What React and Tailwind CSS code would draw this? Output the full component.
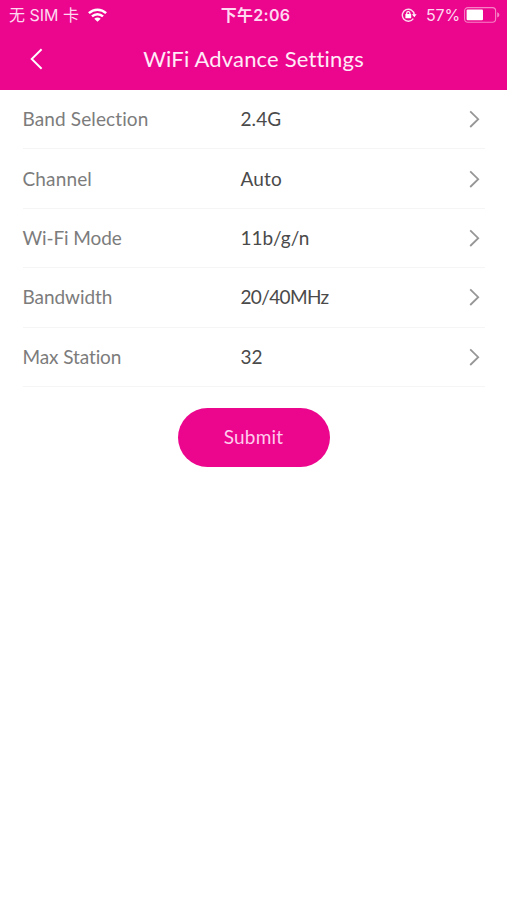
import React from 'react';

const ROWS = [
  { label: 'Band Selection', value: '2.4G', labelTracking: 'tracking-[0.12px]', valueTracking: 'tracking-[0.1px]' },
  { label: 'Channel', value: 'Auto', labelTracking: 'tracking-[0.15px]', valueTracking: 'tracking-[0.2px]' },
  { label: 'Wi-Fi Mode', value: '11b/g/n', labelTracking: 'tracking-[-0.1px]', valueTracking: 'tracking-normal' },
  { label: 'Bandwidth', value: '20/40MHz', labelTracking: 'tracking-[-0.05px]', valueTracking: 'tracking-[-0.65px]' },
  { label: 'Max Station', value: '32', labelTracking: 'tracking-[-0.1px]', valueTracking: 'tracking-normal' },
];

function WifiIcon() {
  return (
    <svg className="ml-[9px] w-[19px] h-[14px]" viewBox="0 0 19 14" fill="none" stroke="#fff" strokeWidth="2.5">
      <path d="M.9 5.1C5.8 .5 13.2 .5 18.1 5.1" />
      <path d="M4 8.4C7.2 5.4 11.8 5.4 15 8.4" />
      <path d="M9.5 13.8 6.3 10.7C8.1 9.1 10.9 9.1 12.7 10.7Z" fill="#fff" stroke="none" />
    </svg>
  );
}

function RotationLockIcon() {
  return (
    <svg className="w-[16px] h-[14px]" viewBox="0 0 16 14" fill="none" stroke="#fff">
      <path d="M12.3 10.6A6 6 0 1 1 13.3 6.6" strokeWidth="1.4" opacity="0.85" />
      <path d="M10.9 6.3H15.6L13.3 9.2Z" fill="#fff" stroke="none" />
      <rect x="4.4" y="6.1" width="5.8" height="4.2" rx="0.5" fill="#fff" stroke="none" />
      <path d="M5.7 6.4V5.2A1.6 1.6 0 0 1 8.9 5.2V6.4" strokeWidth="1.2" />
    </svg>
  );
}

function BatteryIcon() {
  return (
    <svg className="ml-1 w-[36px] h-[16px]" viewBox="0 0 36 16" fill="none">
      <rect x="0.6" y="0.6" width="31" height="14.6" rx="3.2" stroke="#fff" strokeWidth="1.1" opacity="0.5" />
      <rect x="2.6" y="2.5" width="16.4" height="10.8" rx="1" fill="#fff" />
      <path d="M33.2 5.3C36 6.2 36 9.6 33.2 10.5Z" fill="#fff" opacity="0.5" />
    </svg>
  );
}

function StatusBar() {
  return (
    <div className="grid grid-cols-[1fr_auto_1fr] items-center h-[30px] pl-[9px] pr-[7px] text-[16px] leading-[30px] text-[#ffd9f1] font-['Inter','Noto_Sans_CJK_SC',sans-serif]">
      <div className="flex items-center whitespace-pre">
        <span>无 SIM 卡</span>
        <WifiIcon />
      </div>
      <span className="pl-[2px] font-semibold tracking-[0.3px]">下午2:06</span>
      <div className="flex items-center justify-end">
        <RotationLockIcon />
        <span className="ml-[9px] tracking-[-0.2px]">57%</span>
        <BatteryIcon />
      </div>
    </div>
  );
}

function Header() {
  return (
    <header className="h-[90px] bg-[#ec068d]">
      <StatusBar />
      <div className="grid grid-cols-[60px_1fr_60px] items-center h-[58px]">
        <button className="pl-[30px]" aria-label="Back">
          <svg className="w-[13px] h-[22px]" viewBox="0 0 13 22" fill="none" stroke="#fff" strokeWidth="1.9">
            <path d="M11.6 1.2 1.7 11 11.6 20.8" />
          </svg>
        </button>
        <h1 className="text-center text-[22px] leading-[58px] text-[#ffebf8] whitespace-nowrap tracking-[0.18px]">WiFi Advance Settings</h1>
      </div>
    </header>
  );
}

function SettingRow({ row }) {
  return (
    <button className="flex items-center w-full h-[59.4px] pr-[5px] border-b-[1.5px] border-[#f5f5f5] text-left text-[19px] leading-[28px] whitespace-nowrap">
      <span className={`w-[218px] text-[#7c7c7c] ${row.labelTracking}`}>{row.label}</span>
      <span className={`flex-1 text-[#4a4a4a] ${row.valueTracking}`}>{row.value}</span>
      <svg className="w-[11px] h-[18px]" viewBox="0 0 11 18" fill="none" stroke="#969696" strokeWidth="1.8">
        <path d="M1.2 1.4 9.2 9.2 1.2 17" />
      </svg>
    </button>
  );
}

export default function App() {
  return (
    <div className="min-h-screen bg-white font-['Lato',sans-serif]">
      <Header />
      <main className="flex flex-col items-center px-[22.5px]">
        {ROWS.map(row => <SettingRow key={row.label} row={row} />)}
        <button className="mt-[21px] w-[152px] h-[59px] rounded-full bg-[#ec068d] text-[19px] leading-[28px] text-[#ffcbec] tracking-[0.2px]">
          Submit
        </button>
      </main>
    </div>
  );
}
